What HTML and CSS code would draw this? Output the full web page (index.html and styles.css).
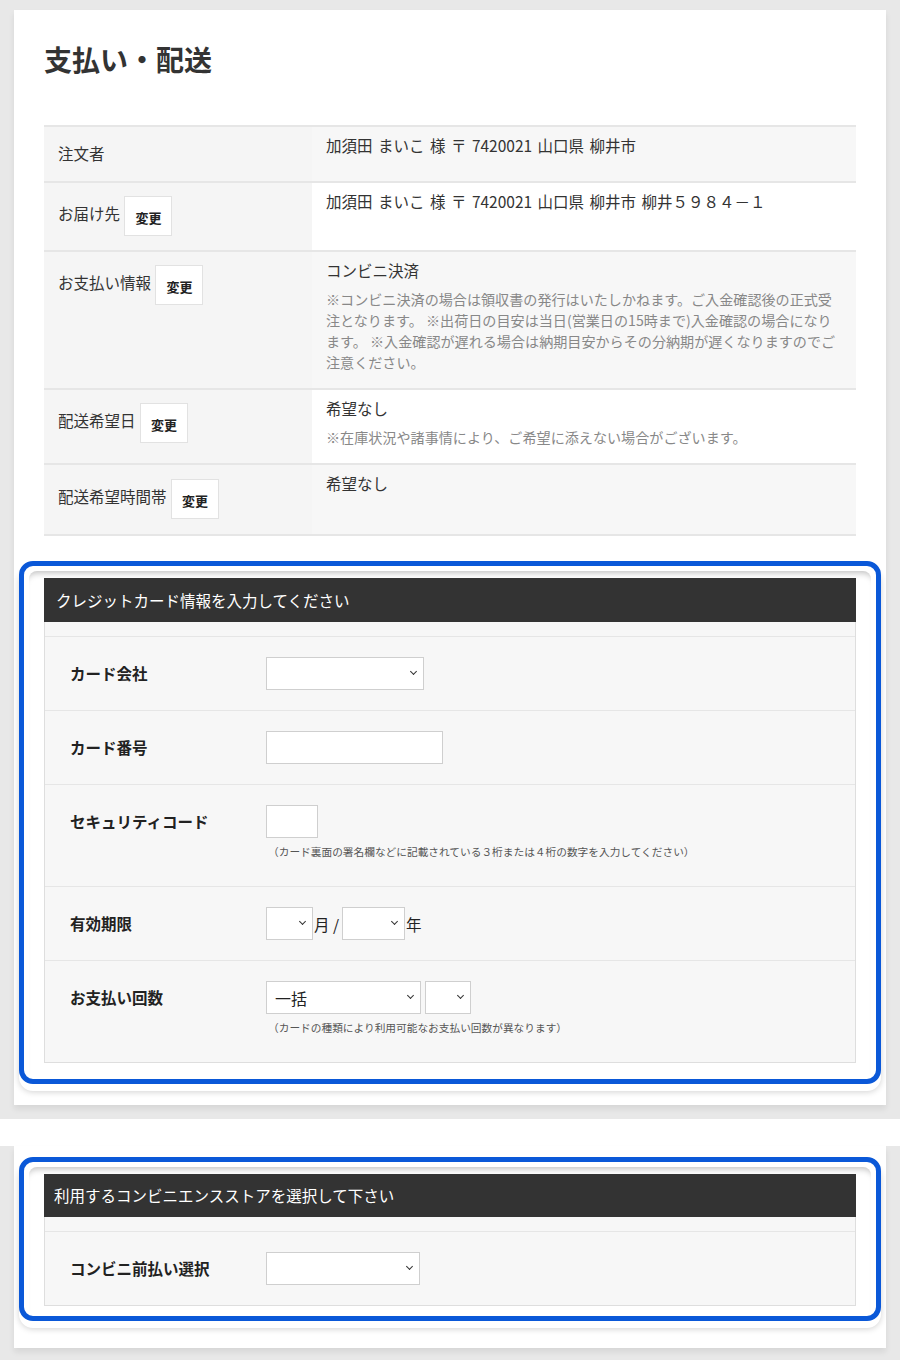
FILE: index.html
```html
<!DOCTYPE html>
<html lang="ja">
<head>
    <meta charset="UTF-8">
    <meta name="viewport" content="width=device-width, initial-scale=1.0">
    <title>支払い・配送</title>
    <link rel="stylesheet" href="styles.css">
</head>
<body>

<div class="shot shot-top">
    <div class="card">
        <h1>支払い・配送</h1>

        <table class="info">
            <tr>
                <th>注文者</th>
                <td>加須田 まいこ 様 〒 7420021 山口県 柳井市</td>
            </tr>
            <tr>
                <th>お届け先 <button class="btn-change">変更</button></th>
                <td>加須田 まいこ 様 〒 7420021 山口県 柳井市 柳井５９８４－１</td>
            </tr>
            <tr>
                <th>お支払い情報 <button class="btn-change">変更</button></th>
                <td>
                    コンビニ決済
                    <p class="note">※コンビニ決済の場合は領収書の発行はいたしかねます。ご入金確認後の正式受注となります。 ※出荷日の目安は当日(営業日の15時まで)入金確認の場合になります。 ※入金確認が遅れる場合は納期目安からその分納期が遅くなりますのでご注意ください。</p>
                </td>
            </tr>
            <tr>
                <th>配送希望日 <button class="btn-change">変更</button></th>
                <td>
                    希望なし
                    <p class="note">※在庫状況や諸事情により、ご希望に添えない場合がございます。</p>
                </td>
            </tr>
            <tr>
                <th>配送希望時間帯 <button class="btn-change">変更</button></th>
                <td>希望なし</td>
            </tr>
        </table>

        <div class="hl-box">
            <div class="hl-panel">
                <div class="form-head">クレジットカード情報を入力してください</div>
                <div class="form-body">
                    <div class="form-row">
                        <div class="form-label">カード会社</div>
                        <div class="form-field">
                            <span class="sel"><select class="w-company"><option></option></select></span>
                        </div>
                    </div>
                    <div class="form-row">
                        <div class="form-label">カード番号</div>
                        <div class="form-field">
                            <input type="text" class="w-number">
                        </div>
                    </div>
                    <div class="form-row">
                        <div class="form-label">セキュリティコード</div>
                        <div class="form-field">
                            <input type="text" class="w-code">
                            <p class="hint">（カード裏面の署名欄などに記載されている３桁または４桁の数字を入力してください）</p>
                        </div>
                    </div>
                    <div class="form-row">
                        <div class="form-label">有効期限</div>
                        <div class="form-field inline">
                            <span class="sel"><select class="w-month"><option></option></select></span>
                            <span class="unit">月 /</span>
                            <span class="sel"><select class="w-year"><option></option></select></span>
                            <span class="unit">年</span>
                        </div>
                    </div>
                    <div class="form-row">
                        <div class="form-label">お支払い回数</div>
                        <div class="form-field">
                            <div class="inline gap">
                                <span class="sel"><select class="w-method"><option>一括</option></select></span>
                                <span class="sel"><select class="w-times"><option></option></select></span>
                            </div>
                            <p class="hint">（カードの種類により利用可能なお支払い回数が異なります）</p>
                        </div>
                    </div>
                </div>
            </div>
        </div>
    </div>
</div>

<div class="shot shot-bottom">
    <div class="card card-cvs">
        <div class="hl-box">
            <div class="hl-panel tight">
                <div class="form-head narrow">利用するコンビニエンスストアを選択して下さい</div>
                <div class="form-body">
                    <div class="form-row">
                        <div class="form-label">コンビニ前払い選択</div>
                        <div class="form-field">
                            <span class="sel"><select class="w-cvs"><option></option></select></span>
                        </div>
                    </div>
                </div>
            </div>
        </div>
    </div>
</div>

</body>
</html>
```

FILE: styles.css
```css
body {
    margin: 0;
    background: #fff;
    font-family: "Noto Sans CJK JP", "Noto Sans", sans-serif;
    color: #333;
}
.shot {
    background: #e8e8e8;
    padding: 0 14px;
}
.shot-top {
    padding-top: 10px;
    padding-bottom: 14px;
    margin-bottom: 27px;
}
.shot-bottom {
    padding-bottom: 13px;
}
.card {
    background: #fff;
    padding: 0 30px 21px;
    box-shadow: 0 4px 6px rgba(0, 0, 0, 0.08);
}
.card-cvs {
    padding: 11px 5px 27px;
}
h1 {
    margin: 0;
    padding: 29px 0 46px;
    font-size: 28px;
    line-height: 40px;
    font-weight: 700;
    color: #333;
}

/* order summary */
.info {
    width: 100%;
    border-collapse: collapse;
    font-size: 15.5px;
}
.info tr {
    border-top: 2px solid #e6e6e6;
}
.info tr:last-child {
    border-bottom: 2px solid #e6e6e6;
}
.info th {
    width: 240px;
    text-align: left;
    vertical-align: top;
    font-weight: normal;
    line-height: 27px;
    padding: 13px 14px 14px;
    background: #f5f5f5;
    white-space: nowrap;
}
.info tr:last-child th {
    padding-top: 14px;
    padding-bottom: 15px;
}
.info td {
    vertical-align: top;
    line-height: 22px;
    word-spacing: 2px;
    padding: 7px 14px 15px 14px;
    background: #fff;
}
.info tr:nth-child(odd) td {
    background: #f7f7f7;
}
.btn-change {
    vertical-align: middle;
    font-family: inherit;
    font-size: 13px;
    font-weight: 700;
    color: #222;
    background: #fff;
    border: 1px solid #e2e2e2;
    width: 48px;
    height: 40px;
    padding: 3px 0 0;
    margin: 0 0 0 1px;
}
.note {
    margin: 8px 0 0;
    font-size: 14.1px;
    line-height: 21px;
    word-spacing: 0;
    color: #888;
}

/* highlighted form boxes */
.hl-box {
    border: 5px solid #0a58d8;
    border-radius: 14px;
    padding: 5px;
    background: #fff;
    box-shadow: 0 7px 0 #fff, 0 8px 6px rgba(0, 0, 0, 0.18);
}
.shot-top .hl-box {
    margin: 25px -25px 0;
}
.hl-panel {
    border-radius: 8px 8px 0 0;
    box-shadow: inset 0 7px 6px -5px rgba(0, 0, 0, 0.25);
    padding: 7px 15px 11px;
}
.hl-panel.tight {
    padding-bottom: 5px;
}
.form-head {
    background: #333;
    color: #fff;
    font-size: 15.5px;
    height: 44px;
    line-height: 44px;
    padding-left: 12px;
}
.form-head.narrow {
    height: 43px;
    line-height: 43px;
    padding-left: 10px;
}
.form-body {
    background: #f7f7f7;
    border: 1px solid #dedede;
    border-top: none;
    padding-top: 14px;
}
.form-row {
    display: flex;
    border-top: 1px solid #e6e6e6;
    padding: 20px 0;
}
.form-label {
    width: 196px;
    padding-left: 25px;
    font-size: 15.5px;
    font-weight: 700;
    line-height: 33px;
    color: #222;
}
.form-field {
    flex: 1;
}
.inline {
    display: flex;
    align-items: center;
}
.inline.gap {
    gap: 4px;
}
.unit {
    font-size: 15.5px;
    color: #222;
    margin: 0 3px 0 1px;
}
.hint {
    margin: 5px 0 0;
    padding: 0 0 5px 2px;
    font-size: 10.7px;
    line-height: 18px;
    color: #555;
}

/* inputs and selects */
input {
    box-sizing: border-box;
    height: 33px;
    border: 1px solid #cfcfcf;
    background: #fff;
    margin: 0;
    display: block;
}
.sel {
    position: relative;
    display: inline-block;
}
.sel::after {
    content: "";
    position: absolute;
    right: 8px;
    top: 12px;
    width: 4px;
    height: 4px;
    border-right: 1.2px solid #333;
    border-bottom: 1.2px solid #333;
    transform: rotate(45deg);
    pointer-events: none;
}
select {
    -webkit-appearance: none;
    appearance: none;
    box-sizing: border-box;
    height: 33px;
    border: 1px solid #cfcfcf;
    border-radius: 0;
    background: #fff;
    font-family: inherit;
    font-size: 16px;
    color: #222;
    padding: 0 8px;
    margin: 0;
    display: block;
}
.w-company { width: 158px; }
.w-number { width: 177px; }
.w-code { width: 52px; }
.w-month { width: 47px; }
.w-year { width: 63px; }
.w-method { width: 155px; }
.w-times { width: 46px; }
.w-cvs { width: 154px; }
```
